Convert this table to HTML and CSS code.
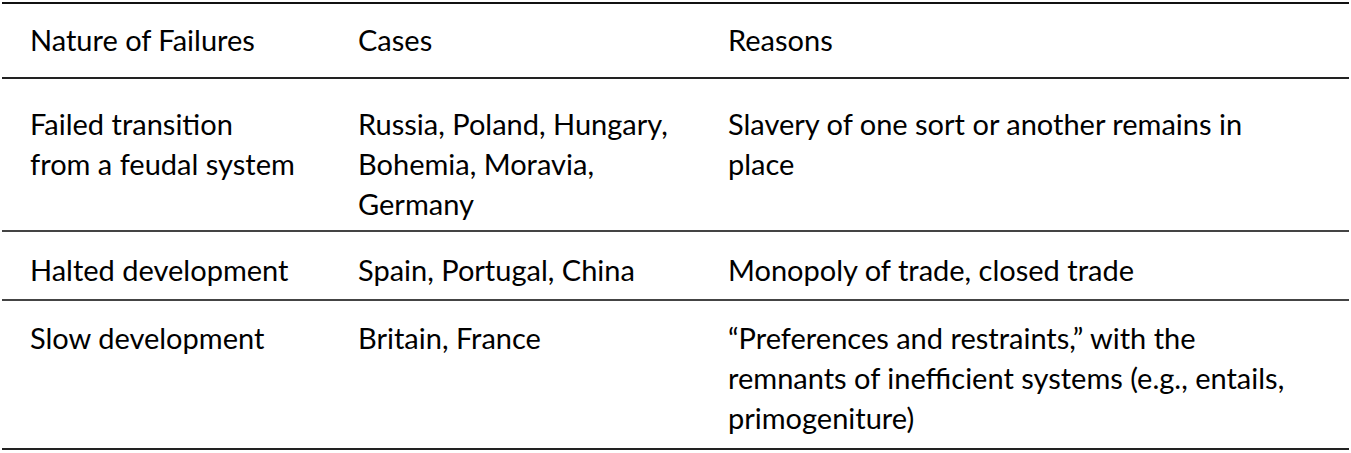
FILE: index.html
```
<!DOCTYPE html>
<html lang="en">
<head>
    <meta charset="UTF-8">
    <meta name="viewport" content="width=device-width, initial-scale=1.0">
    <title>Nature of Failures</title>
    <link rel="stylesheet" href="styles.css">
</head>
<body>
    <table class="failures">
        <colgroup>
            <col class="col-nature">
            <col class="col-cases">
            <col class="col-reasons">
        </colgroup>
        <thead>
            <tr>
                <th>Nature of Failures</th>
                <th>Cases</th>
                <th>Reasons</th>
            </tr>
        </thead>
        <tbody>
            <tr class="row-feudal">
                <td>Failed transition from a feudal system</td>
                <td>Russia, Poland, Hungary, Bohemia, Moravia, Germany</td>
                <td>Slavery of one sort or another remains in place</td>
            </tr>
            <tr class="row-halted">
                <td>Halted development</td>
                <td>Spain, Portugal, China</td>
                <td>Monopoly of trade, closed trade</td>
            </tr>
            <tr class="row-slow">
                <td>Slow development</td>
                <td>Britain, France</td>
                <td>&ldquo;Preferences and restraints,&rdquo; with the remnants of inefficient systems (e.g., entails, primogeniture)</td>
            </tr>
        </tbody>
    </table>
</body>
</html>
```

FILE: styles.css
```
body {
    margin: 0;
    padding: 2px 2px 0;
    background-color: #fff;
    color: #000;
    font-family: Lato, "Open Sans", sans-serif;
    font-size: 29px;
    line-height: 40px;
}

.failures {
    width: 100%;
    border-collapse: collapse;
    table-layout: fixed;
    border-top: 2px solid #111;
    border-bottom: 2px solid #222;
}

.col-nature {
    width: 328px;
}

.col-cases {
    width: 370px;
}

.failures th,
.failures td {
    text-align: left;
    vertical-align: top;
    font-weight: normal;
    padding-left: 28px;
}

/* wrap widths tuned so lines break as in the printed table */
.failures th:nth-child(1),
.failures td:nth-child(1) {
    padding-right: 32px;
}

.failures th:nth-child(2),
.failures td:nth-child(2) {
    padding-right: 22px;
}

.failures th:nth-child(3),
.failures td:nth-child(3) {
    padding-right: 51px;
}

.failures th {
    padding-top: 16px;
    padding-bottom: 17px;
    border-bottom: 2px solid #222;
}

.failures tbody tr + tr td {
    border-top: 2px solid #444;
}

.row-feudal td {
    padding-top: 25px;
    padding-bottom: 6px;
}

.row-halted td {
    padding-top: 18px;
    padding-bottom: 9px;
}

.row-slow td {
    padding-top: 17px;
    padding-bottom: 10px;
}
```
